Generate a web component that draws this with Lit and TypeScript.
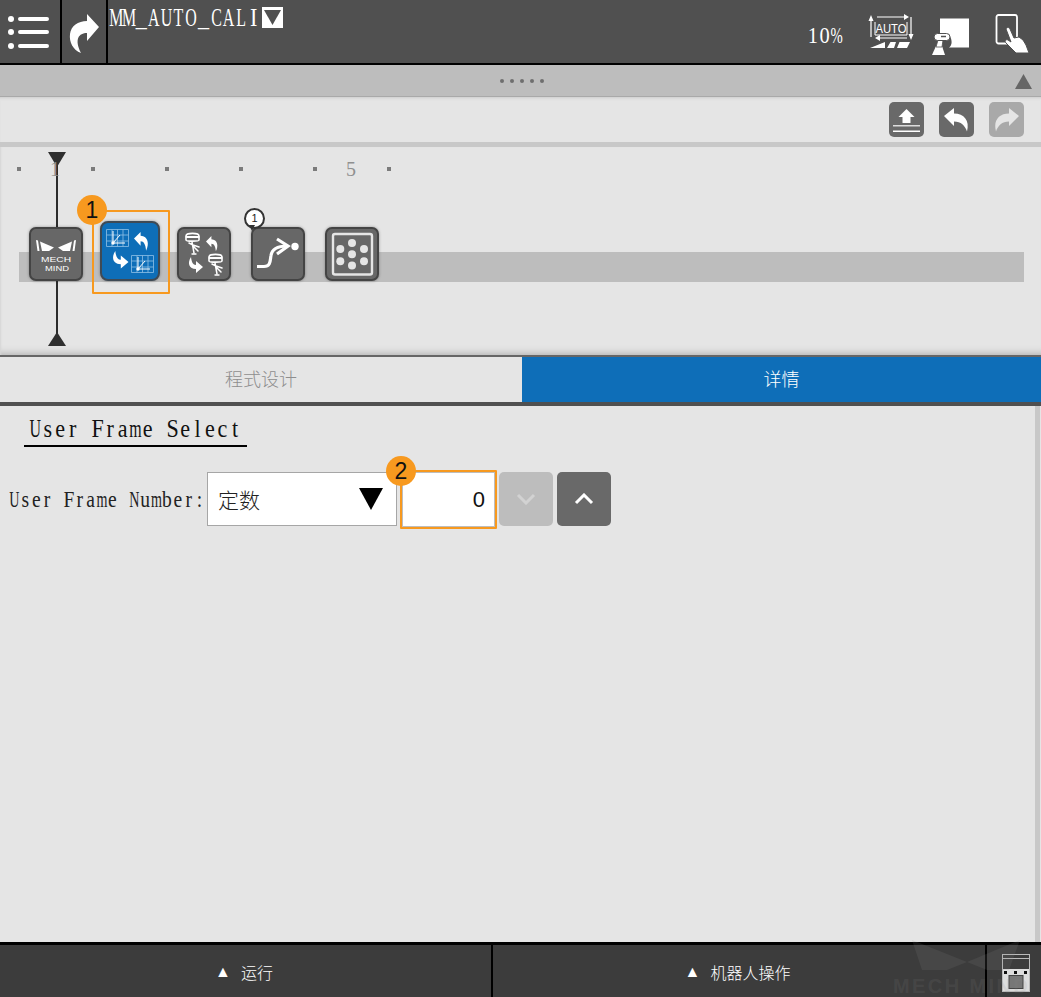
import { LitElement, html, css, svg } from "lit";
import { customElement } from "lit/decorators.js";

const grid = (x: number, y: number) => svg`
  <g transform="translate(${x} ${y})" fill="none">
    <path d="M.5.5h22v17H.5zM.5 6h22M.5 12h22M6 .5v17M11.5.5v17M17 .5v17" stroke="#8fc0e6" stroke-width=".8"/>
    <path d="M7 2v12h12M7 14l7-8" stroke="#fff" stroke-width="1"/>
    <circle cx="7" cy="14" r="1.700" fill="#fff"/>
  </g>`;

const cam = (x: number, y: number) => svg`
  <g transform="translate(${x} ${y})" fill="none" stroke="#fff" stroke-linecap="round">
    <path d="M1 3C1-.5 14-.5 14 3V7c0 1.500-13 1.500-13 0Z" stroke-width="1.600"/>
    <path d="M1.500 4h12" stroke-width="2"/>
    <path d="M7 9l2 11M8 12l6 2M8 13l5 5M4 10l4 2" stroke-width="1.500"/>
    <path d="M7 21h4" stroke-width="1.300"/>
  </g>`;

const turnLeft = (x: number, y: number, s = 1) => svg`
  <path transform="translate(${x} ${y}) scale(${s})" fill="#fff" d="M6 0 0 6l6 6.500V8.500c3 0 4.500 3 5 8.500 3-6 2-13-5-13.500Z"/>`;

const turnRight = (x: number, y: number, s = 1) => svg`
  <path transform="translate(${x} ${y}) scale(${s})" fill="#fff" d="M3 0C-1 6 1 12 8 12v4l7-6-7-6v4C5 8 3.500 5 3 0Z"/>`;

const WIDE = "MAUOCNLTm%";
const mono = (text: string) => html`<span class="mono">${[...text].map((c) => html`<b class="${WIDE.includes(c) ? "w" : ""}">${c === " " ? "\u00a0" : c}</b>`)}</span>`;

@customElement("app-root")
export class AppRoot extends LitElement {
  static styles = css`
    :host { display: block; width: 1041px; height: 997px; position: relative; overflow: hidden; background: #e5e5e5; font-family: "Liberation Sans", sans-serif; }
    * { box-sizing: border-box; }
    .page { height: 997px; display: flex; flex-direction: column; }
    svg { display: block; flex: none; }
    .mono { font-family: "Liberation Serif", serif; display: inline-flex; flex: none; transform-origin: left center; white-space: nowrap; transform: scaleX(.85); font-size: 26px; --cell: 14.7px; }
    .mono b { font-weight: 400; display: inline-flex; justify-content: center; width: var(--cell); }
    .mono b.w { transform: scaleX(.72); }

    .top { height: 65px; flex: none; background: #505050; border-bottom: 2px solid #000; display: flex; }
    .top .cell { border-right: 2px solid #000; display: flex; align-items: center; justify-content: center; }
    .cell.menu { width: 62px; }
    .cell.back { width: 46px; }
    .prog { display: flex; align-items: flex-start; padding: 7px 0 0 2px; gap: 2px; height: 28px; color: #fff; }
    .prog .slot { width: 150px; height: 21px; display: flex; align-items: center; }
    .drop { width: 21px; height: 21px; background: #fff; display: flex; align-items: center; justify-content: center; }
    .status { margin-left: auto; display: flex; align-items: center; padding: 0 8px 0 0; position: relative; }
    .pct { color: #fff; width: 60px; height: 30px; margin-top: 7px; display: flex; align-items: center; }
    .pct .mono { font-size: 24px; --cell: 13.76px; }

    .handle { height: 32px; flex: none; background: #bdbdbd; border-bottom: 1px solid #a9a9a9; display: flex; align-items: center; position: relative; padding: 0 9px 0 500px; }
    .dots { display: flex; gap: 6px; margin-top: 1px; }
    .dots i { width: 4px; height: 4px; border-radius: 50%; background: #6f6f6f; }
    .handle .up { margin-left: auto; margin-top: 1px; }

    .tools { height: 45px; flex: none; display: flex; justify-content: flex-end; align-items: center; gap: 15px; padding: 0 17px 0 0; box-shadow: inset 0 3px 3px -2px #ccc; }
    .tool { width: 35px; height: 35px; border-radius: 5px; background: #696969; display: flex; align-items: center; justify-content: center; }
    .tool.off { background: #a9a9a9; }
    .flip { transform: scaleX(-1); }
    .sep { height: 5px; flex: none; background: #c8c8c8; }

    .timeline { height: 210px; flex: none; position: relative; background: #e5e5e5; border-bottom: 2px solid #666; box-shadow: inset 2px 0 2px -1px #d6d6d6, inset 0 -9px 7px -7px #b5b5b5; padding: 0 0 0 19px; display: flex; flex-direction: column; }
    .ruler { display: flex; height: 44px; padding-top: 13px; flex: none; margin-left: -2px; }
    .rc { width: 74px; height: 18px; flex: none; position: relative; text-align: center; font-family: "Liberation Serif", serif; font-size: 20px; color: #8f8f8f; line-height: 18px; padding-left: 2px; }
    .rc.end { width: 10px; }
    .rc::before { content: ""; position: absolute; left: 0; top: 7px; width: 4px; height: 4px; background: #7b7b7b; }
    .band { position: absolute; left: 19px; right: 17px; top: 105px; height: 30px; background: #bdbdbd; }
    .play { position: absolute; left: 48px; top: 5px; width: 18px; height: 194px; display: flex; flex-direction: column; align-items: center; justify-content: space-between; }
    .play::before { content: ""; position: absolute; left: 7.500px; width: 2.500px; top: 0; bottom: 0; background: #2c2c2c; }
    .play svg { position: relative; }
    .nodes { display: flex; align-items: flex-end; height: 90px; position: relative; }
    .nc { width: 74px; flex: none; display: flex; justify-content: center; position: relative; }
    .node { width: 54px; height: 54px; border-radius: 7px; background: #676767; border: 2px solid #444; box-shadow: 0 0 3px rgba(0,0,0,.35); position: relative; }
    .node.sel { width: 60px; height: 60px; background: #0e6eb8; border-color: #3f4a55; border-radius: 8px; }
    .node svg { position: absolute; left: -2px; top: -2px; }
    .mark { position: absolute; left: -1px; top: -11px; width: 78px; height: 84px; border: 2px solid #f7991f; border-radius: 1px; }
    .badge { position: absolute; width: 30px; height: 30px; border-radius: 50%; background: #f7991f; color: #111; font-size: 23px; line-height: 30px; text-align: center; z-index: 3; }
    .b1 { left: -16px; top: -26px; }
    .b2 { left: -16px; top: -16px; }
    .note { position: absolute; left: 3px; top: -19px; width: 21px; height: 21px; border-radius: 50%; background: #fff; border: 2px solid #333; color: #222; font-size: 11px; line-height: 17px; text-align: center; z-index: 2; }
    .note::after { content: ""; position: absolute; left: 3px; top: 15px; border: 3px solid transparent; border-top: 6px solid #333; }

    .tabs { height: 45px; flex: none; display: flex; font-family: "Noto Sans CJK SC", sans-serif; font-size: 18px; font-weight: 300; }
    .tab { display: flex; align-items: center; justify-content: center; color: #8e8e8e; padding-bottom: 4px; }
    .tab.a { width: 522px; flex: none; }
    .tab.b { flex: 1; background: #0e6eb8; color: #fff; }
    .rule { height: 4px; flex: none; background: #505050; }

    .content { flex: 1; position: relative; padding: 0 0 0 9px; }
    .scroll { position: absolute; right: 1px; top: 0; bottom: 0; width: 5px; background: #c8c8c8; }
    .title { margin: 0 0 0 15px; width: 223px; height: 41px; border-bottom: 2px solid #000; padding: 8px 0 0 5px; color: #111; }
    .row { display: flex; align-items: flex-start; margin-top: 25px; }
    .lab { width: 198px; flex: none; height: 54px; display: flex; align-items: center; color: #222; }
    .lab .mono { font-size: 23px; --cell: 12.82px; margin-top: 1px; }
    .select { width: 190px; height: 54px; flex: none; background: #fff; border: 1px solid #a6a6a6; display: flex; align-items: center; justify-content: space-between; padding: 0 13px 0 10px; font-family: "Noto Sans CJK SC", sans-serif; font-size: 21px; font-weight: 300; color: #222; }
    .field { position: relative; width: 97px; height: 59px; flex: none; margin: -2px 0 0 3px; border: 2px solid #f7991f; border-radius: 1px; background: #fff; box-shadow: inset 0 0 0 1px #bdbdbd; display: flex; align-items: center; justify-content: flex-end; padding: 0 10px 0 0; font-size: 22px; color: #111; }
    .btn { width: 54px; height: 54px; border-radius: 5px; flex: none; display: flex; align-items: center; justify-content: center; background: #696969; margin-left: 4px; }
    .btn.first { margin-left: 2px; background: #bdbdbd; }

    .bottom { height: 55px; flex: none; background: #3c3c3c; border-top: 3px solid #000; display: flex; color: #fff; font-family: "Noto Sans CJK SC", sans-serif; font-size: 16px; font-weight: 300; }
    .bc { display: flex; align-items: center; justify-content: center; gap: 10px; border-right: 2px solid #000; padding-top: 1px; }
    .bc.r { width: 493px; padding-right: 3px; }
    .bc.o { width: 494px; padding-right: 3px; }
    .bc.i { flex: 1; border: 0; padding: 4px 0 0 3px; }
    .tri { font-family: "DejaVu Sans", sans-serif; font-size: 16px; }

    .mark-wm { position: absolute; left: 893px; top: 938px; width: 148px; height: 59px; pointer-events: none; color: rgba(135,135,135,.15); font-weight: 700; font-size: 20px; letter-spacing: 2.400px; white-space: nowrap; overflow: hidden; }
    .mark-wm svg { margin: 0 0 5px 19px; }
    .mark-wm span { display: block; line-height: 18px; }
  `;

  render() {
    return html`<div class="page">
      <header class="top">
        <div class="cell menu">
          <svg width="60" height="63" viewBox="0 0 60 63">
            <g fill="#fff"><circle cx="11" cy="19" r="3"/><circle cx="11" cy="32" r="3"/><circle cx="11" cy="46" r="3"/></g>
            <path d="M20 19h27M20 32h27M20 46h27" stroke="#fff" stroke-width="4" stroke-linecap="round"/>
          </svg>
        </div>
        <div class="cell back">
          <svg width="44" height="63" viewBox="62 0 44 63"><path fill="#fff" d="M87 14 99 27 87 41v-8c-8 0-13 6-6 20-8-3-12-11-11-19 1-8 8-13 17-13Z"/></svg>
        </div>
        <div class="prog">
          <div class="slot">${mono("MM_AUTO_CALI")}</div>
          <div class="drop"><svg width="17" height="15" viewBox="0 0 17 15"><path d="M0 0h17L8.500 15Z" fill="#505050"/></svg></div>
        </div>
        <div class="status">
          <div class="pct">${mono("10%")}</div>
          <svg width="48" height="40" viewBox="0 0 48 40" style="margin-top:3px">
            <g stroke="#fff" fill="none" stroke-width="1.200">
              <path d="M10 4h28M4 8v16M44 4v18M12 25h28"/>
              <path d="M8 9v13h32V9" stroke-width="1"/>
            </g>
            <g fill="#fff">
              <path d="M1.500 8 4 2l2.500 6ZM37 1l5 3-5 3ZM41.500 21h5L44 27ZM13 22v6l-5-3Z"/>
              <path d="M3 35 18 29v6ZM20 35l3.500-6H29l-2 6ZM30 35l2.500-6H43l-3 6Z"/>
            </g>
            <text x="24" y="20" text-anchor="middle" fill="#fff" font-family="Liberation Sans" font-size="13" textLength="31" lengthAdjust="spacingAndGlyphs">AUTO</text>
          </svg>
          <svg width="40" height="40" viewBox="0 0 40 40" style="margin-left:17px;margin-top:10px">
            <path fill="#fff" d="M8 1.500h29v29H17c3-2 3-6 2-9-1-3-3-4-6-4H8Z"/>
            <path d="M4 29h6l3 9H0Z" fill="#fff"/>
            <path d="M6 23l-2 7h6l1-7Z" fill="#fff" stroke="#505050" stroke-width=".8"/>
            <rect x="2" y="16.500" width="16" height="7" rx="3.500" fill="#fff" stroke="#505050" stroke-width="1"/>
            <path d="M9 19.500h5" stroke="#505050" stroke-width="1.500"/>
          </svg>
          <svg width="38" height="44" viewBox="0 0 38 44" style="margin-left:23px;margin-top:6px">
            <rect x="1.500" y="2" width="20.500" height="28.500" rx="2" fill="none" stroke="#fff" stroke-width="1.800"/>
            <path fill="#fff" stroke="#505050" stroke-width="1" d="M11 16c1-2 3-2 4 0l4 9 5-1 4 3 3 5 3 8H21l-5-5-5-5c-2-2 0-4 2-3l3 2Z"/>
          </svg>
        </div>
      </header>

      <div class="handle">
        <div class="dots"><i></i><i></i><i></i><i></i><i></i></div>
        <svg class="up" width="17" height="15" viewBox="0 0 17 15"><path d="M8.500 0 17 15H0Z" fill="#666"/></svg>
      </div>

      <div class="tools">
        <div class="tool">
          <svg width="35" height="35" viewBox="0 0 35 35" fill="#fff"><path d="M17.500 7 25.500 15H21.500v6h-8v-6h-4Z"/><path d="M4 23h27v1.500H4Z" fill="#ddd"/><path d="M4 28.500h27v1.500H4Z"/></svg>
        </div>
        <div class="tool">${this.turnIcon("#fff")}</div>
        <div class="tool off"><div class="flip">${this.turnIcon("#e5e5e5")}</div></div>
      </div>
      <div class="sep"></div>

      <section class="timeline">
        <div class="band"></div>
        <div class="play">
          <svg width="18" height="15" viewBox="0 0 18 15"><path d="M0 0h18L9 15Z" fill="#2f2f2f"/></svg>
          <svg width="18" height="14" viewBox="0 0 18 14"><path d="M9 0l9 14H0Z" fill="#2f2f2f"/></svg>
        </div>
        <div class="ruler">
          <div class="rc">1</div><div class="rc"></div><div class="rc"></div><div class="rc"></div><div class="rc">5</div><div class="rc end"></div>
        </div>
        <div class="nodes">
          <div class="nc"><div class="node">${this.logo()}</div></div>
          <div class="nc">
            <div class="mark"></div>
            <div class="badge b1">1</div>
            <div class="node sel">
              <svg width="60" height="60" viewBox="0 0 60 60">
                ${grid(6, 8)}${grid(31, 34)}
                ${turnLeft(34, 11, 1.100)}${turnRight(12, 30, 1.100)}
              </svg>
            </div>
          </div>
          <div class="nc"><div class="node">
            <svg width="54" height="54" viewBox="0 0 54 54">
              ${cam(8, 6)}${cam(31, 27)}
              ${turnLeft(29, 9, .9)}${turnRight(11, 30, 1)}
            </svg>
          </div></div>
          <div class="nc"><div class="note">1</div><div class="node">
            <svg width="54" height="54" viewBox="0 0 54 54">
              <path d="M6 39.500h7c7 0 6-6 7-11 1-6 5-9.500 16-9.500" fill="none" stroke="#fff" stroke-width="3.200"/>
              <path d="M26 12l11 7-11 8" fill="none" stroke="#fff" stroke-width="3.200"/>
              <circle cx="44" cy="19.500" r="3.700" fill="#fff"/>
            </svg>
          </div></div>
          <div class="nc"><div class="node">
            <svg width="54" height="54" viewBox="0 0 54 54">
              <rect x="8" y="7" width="39" height="40.500" rx="2" fill="none" stroke="#e5e5e5" stroke-width="2.400"/>
              <g fill="#e5e5e5"><circle cx="27" cy="16" r="4"/><circle cx="15.300" cy="22" r="4"/><circle cx="39" cy="22" r="4"/><circle cx="27" cy="27.300" r="4"/><circle cx="15.300" cy="34.300" r="4"/><circle cx="39" cy="34.300" r="4"/><circle cx="27" cy="38.500" r="4"/></g>
            </svg>
          </div></div>
        </div>
      </section>

      <nav class="tabs"><div class="tab a">程式设计</div><div class="tab b">详情</div></nav>
      <div class="rule"></div>

      <main class="content">
        <div class="scroll"></div>
        <div class="title">${mono("User Frame Select")}</div>
        <div class="row">
          <div class="lab">${mono("User Frame Number:")}</div>
          <div class="select"><span>定数</span>
            <svg width="24" height="22" viewBox="0 0 24 22"><path d="M0 0h24L12 22Z" fill="#000"/></svg>
          </div>
          <div class="field"><div class="badge b2">2</div>0</div>
          <div class="btn first"><svg width="20" height="12" viewBox="0 0 20 12"><path d="M2 2l8 8 8-8" fill="none" stroke="#d2d2d2" stroke-width="3"/></svg></div>
          <div class="btn"><svg width="20" height="12" viewBox="0 0 20 12"><path d="M2 10l8-8 8 8" fill="none" stroke="#fff" stroke-width="3"/></svg></div>
        </div>
      </main>

      <footer class="bottom">
        <div class="bc r"><span class="tri">▲</span>运行</div>
        <div class="bc o"><span class="tri">▲</span>机器人操作</div>
        <div class="bc i">
          <svg width="28" height="38" viewBox="0 0 28 38">
            <path d="M0 15h28v23H0Z" fill="#ddd"/>
            <rect x=".5" y=".5" width="27" height="37" fill="none" stroke="#bbb"/>
            <path d="M.5 4.500h27" stroke="#bbb"/>
            <path d="M2 17h3v3H2ZM12 17h3v3h-3ZM22 17h3v3h-3Z" fill="#111"/>
            <rect x="7" y="21.500" width="14" height="13" fill="#777" stroke="#444"/>
          </svg>
        </div>
      </footer>
    </div>
    <div class="mark-wm">
      <svg width="110" height="34" viewBox="0 0 110 34" fill="currentColor"><path d="M0 2 10 32h25L55 24 75 32h22L108 2 55 24Z"/></svg>
      <span>MECH MIND</span>
    </div>`;
  }

  turnIcon(color: string) {
    return html`<svg width="35" height="35" viewBox="0 0 35 35"><path fill="${color}" d="M5 14 15 6v5.500c10 0 16 7 13 18-2-6-6-10-13-10v4.500Z"/></svg>`;
  }

  logo() {
    return html`<svg width="54" height="54" viewBox="0 0 54 54">
      <g fill="#fff">
        <path d="M7 13l1.500 11h2L9 13.500ZM11 14.500 25 20.500 20 24H13ZM47 13l-1.500 11h-2L45 13.500ZM43 14.500 29 20.500 34 24H41Z"/>
      </g>
      <g fill="#fff" font-family="Liberation Sans" font-size="7.500" text-anchor="middle">
        <text x="27" y="34.500" textLength="30" lengthAdjust="spacingAndGlyphs">MECH</text>
        <text x="28" y="43.500" textLength="24" lengthAdjust="spacingAndGlyphs">MIND</text>
      </g>
    </svg>`;
  }
}
